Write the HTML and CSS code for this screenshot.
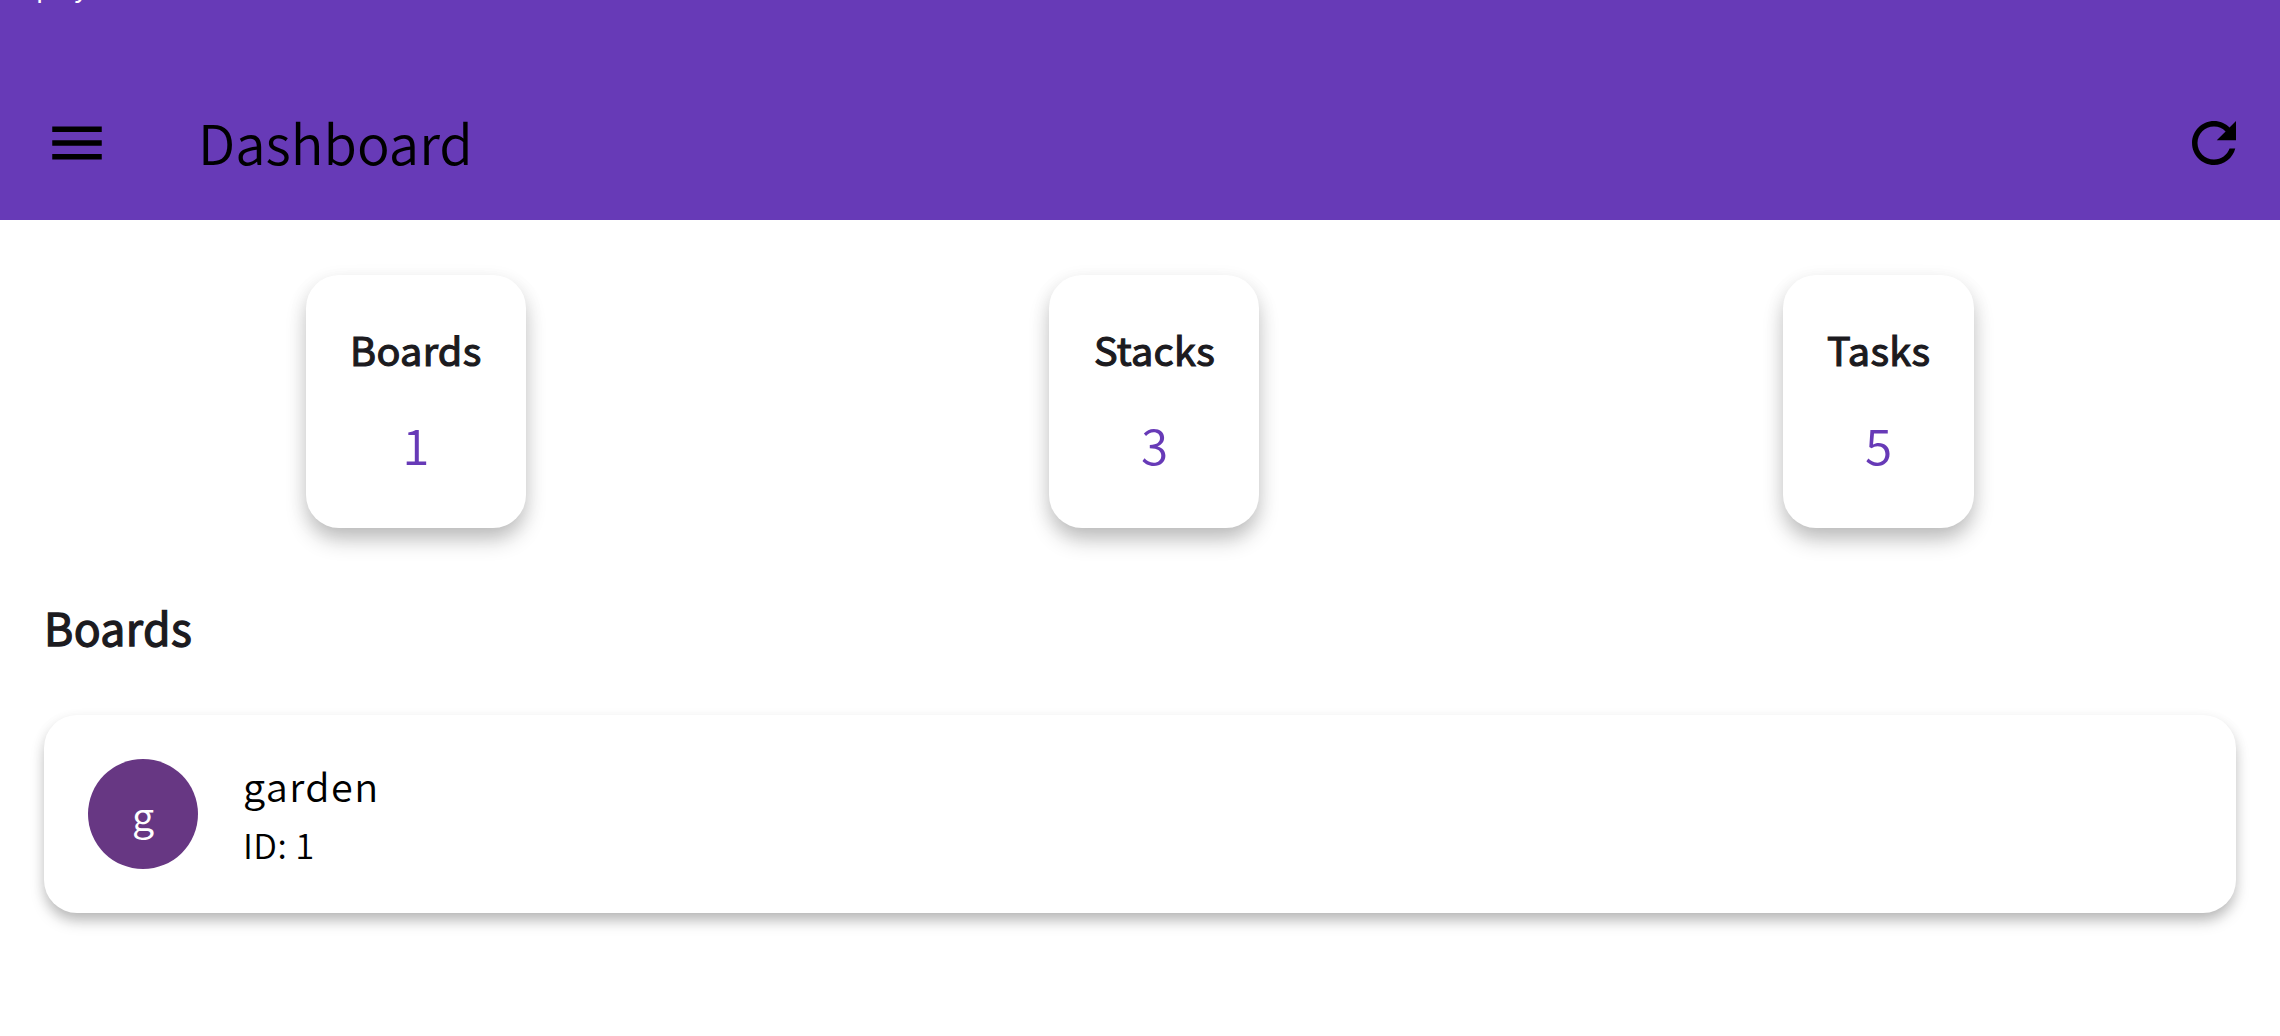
FILE: index.html
```html
<!DOCTYPE html>
<html lang="en">
<head>
<meta charset="utf-8">
<title>Dashboard</title>
<link rel="stylesheet" href="styles.css">
</head>
<body>
<header class="appbar">
  <span class="status">play</span>
  <svg class="icon" viewBox="0 0 24 24"><path d="M3 18h18v-2H3v2zm0-5h18v-2H3v2zm0-7v2h18V6H3z"/></svg>
  <h1 class="title">Dashboard</h1>
  <svg class="icon" viewBox="0 0 24 24"><path d="M17.65 6.35C16.2 4.9 14.21 4 12 4c-4.42 0-7.99 3.58-7.99 8s3.57 8 7.99 8c3.73 0 6.84-2.55 7.73-6h-2.08c-.82 2.33-3.04 4-5.65 4-3.31 0-6-2.69-6-6s2.69-6 6-6c1.66 0 3.14.69 4.22 1.78L13 11h7V4l-2.35 2.35z"/></svg>
</header>
<main class="content">
  <section class="stats">
    <div class="stat stat-boards"><h2 class="label">Boards</h2><span class="value">1</span></div>
    <div class="stat stat-stacks"><h2 class="label">Stacks</h2><span class="value">3</span></div>
    <div class="stat stat-tasks"><h2 class="label">Tasks</h2><span class="value">5</span></div>
  </section>
  <h2 class="section">Boards</h2>
  <article class="board">
    <div class="avatar">g</div>
    <div class="info">
      <span class="name">garden</span>
      <span class="meta">ID: 1</span>
    </div>
  </article>
</main>
</body>
</html>
```
FILE: styles.css
```css
* { box-sizing: border-box; margin: 0; }
body {
  height: 1036px;
  overflow: hidden;
  background: #fff;
  color: #000;
  font-family: "Noto Sans CJK SC DemiLight", "Noto Sans CJK SC", "Noto Sans", sans-serif;
  font-weight: 350;
}
.appbar {
  position: relative;
  display: flex;
  align-items: center;
  height: 220px;
  padding: 66px 33px 0 44px;
  overflow: hidden;
  background: #673ab7;
}
.status {
  position: absolute;
  left: 36px;
  top: -31px;
  color: #fff;
  font-family: "Noto Sans CJK SC", "Noto Sans", sans-serif;
  font-size: 26px;
  font-weight: 400;
  line-height: 34px;
}
.icon { width: 66px; height: 66px; flex: none; }
.title {
  flex: 1;
  margin-left: 88px;
  padding-bottom: 2px;
  font-size: 54.45px;
  font-weight: 350;
  line-height: 78px;
}
.content { padding: 55px 44px 0; }
.stats { display: flex; justify-content: space-around; }
.stat {
  display: flex;
  flex-direction: column;
  align-items: center;
  height: 253px;
  padding-top: 43px;
  border-radius: 33px;
  background: #fff;
  box-shadow: 0 13px 22px -2px rgba(0,0,0,.24), 0 5px 20px rgba(0,0,0,.07);
}
.stat-boards { width: 220px; }
.stat-stacks { width: 210px; }
.stat-tasks { width: 191px; }
.label {
  color: #1c1b1f;
  font-family: "Noto Sans CJK SC", "Noto Sans", sans-serif;
  font-size: 39.6px;
  font-weight: 400;
  line-height: 61px;
  letter-spacing: .3px;
  -webkit-text-stroke: 1.2px #1c1b1f;
}
.value {
  margin-top: 34px;
  color: #673ab7;
  font-size: 49.5px;
  line-height: 61px;
}
.section {
  margin-top: 65px;
  color: #1c1b1f;
  font-family: "Noto Sans CJK SC", "Noto Sans", sans-serif;
  font-size: 44.55px;
  font-weight: 400;
  line-height: 67px;
  letter-spacing: .4px;
  -webkit-text-stroke: 1.3px #1c1b1f;
}
.board {
  display: flex;
  align-items: center;
  gap: 45px;
  height: 198px;
  margin-top: 55px;
  padding: 0 44px;
  border-radius: 33px;
  background: #fff;
  box-shadow: 0 9px 15px -2px rgba(0,0,0,.26), 0 4px 14px rgba(0,0,0,.07);
}
.avatar {
  width: 110px;
  height: 110px;
  border-radius: 50%;
  background: #673783;
  color: #fff;
  font-size: 39.6px;
  line-height: 110px;
  text-align: center;
}
.info { display: flex; flex-direction: column; padding-bottom: 5px; }
.name { font-size: 39.6px; line-height: 66px; letter-spacing: 1.4px; }
.meta { font-size: 34.65px; line-height: 53px; letter-spacing: .4px; }
```
